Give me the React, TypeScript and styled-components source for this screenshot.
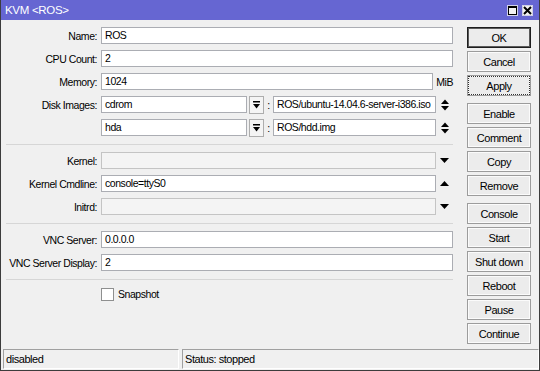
import React from "react";
import styled, { createGlobalStyle, css } from "styled-components";

const GlobalStyle = createGlobalStyle`
  html, body {
    margin: 0;
    padding: 0;
    background: #f0f0f0;
  }
  body {
    font-family: "Liberation Sans", Arial, sans-serif;
    font-size: 10.5px;
    letter-spacing: -0.45px;
    color: #000;
  }
`;

const Window = styled.div`
  width: 540px;
  height: 371px;
  box-sizing: border-box;
  border: 1px solid #3c3c3c;
  border-top: none;
  background: #f0f0f0;
  display: flex;
  flex-direction: column;
`;

const TitleBar = styled.div`
  height: 20px;
  flex: none;
  background: #6666d2;
  color: #fff;
  display: flex;
  align-items: center;
  justify-content: space-between;
  padding: 0 6px 0 4px;
  font-size: 11.5px;
  letter-spacing: -0.3px;
`;

const TitleButtons = styled.div`
  display: flex;
  gap: 4px;
  margin-top: 1px;
`;

const TitleButton = styled.div`
  width: 11px;
  height: 11px;
  box-sizing: border-box;
  background: #f2f2f2;
  border: 1px solid #d0d0e8;
  display: flex;
  align-items: center;
  justify-content: center;
`;

const Body = styled.div`
  flex: 1;
  display: flex;
  padding-top: 7px;
`;

const Form = styled.div`
  width: 452px;
  display: flex;
  flex-direction: column;
  gap: 6px;
`;

const Row = styled.div`
  display: grid;
  grid-template-columns: 96px 352px;
  column-gap: 4px;
  align-items: center;
  height: 17px;
`;

const Label = styled.div`
  text-align: right;
  white-space: nowrap;
`;

const FieldLine = styled.div`
  display: flex;
  align-items: center;
  height: 17px;
`;

const Input = styled.div<{ $disabled?: boolean; $width?: number }>`
  box-sizing: border-box;
  height: 17px;
  line-height: 15px;
  padding: 0 3px;
  border: 1px solid #abadb3;
  background: #fff;
  white-space: nowrap;
  overflow: hidden;
  ${(p) => (p.$width ? css`width: ${p.$width}px; flex: none;` : css`flex: 1;`)}
  ${(p) =>
    p.$disabled &&
    css`
      background: #f4f4f4;
      border-color: #c4c4c4;
    `}
`;

const Unit = styled.div`
  width: 20px;
  text-align: right;
`;

const DropBox = styled.div`
  width: 15px;
  height: 18px;
  box-sizing: border-box;
  margin-left: 2px;
  border: 1px solid #adadad;
  background: #f4f4f4;
  display: flex;
  align-items: center;
  justify-content: center;
`;

const Colon = styled.div`
  width: 9px;
  text-align: center;
`;

const IconCell = styled.div`
  width: 17px;
  display: flex;
  justify-content: center;
  align-items: center;
`;

const Divider = styled.div`
  height: 1px;
  background: #d6d6d6;
  margin: 2px 0 1px 5px;
  width: 447px;
`;

const CheckRow = styled.div`
  display: flex;
  align-items: center;
  gap: 4px;
  padding-left: 100px;
  height: 14px;
`;

const CheckBox = styled.div`
  width: 13px;
  height: 13px;
  box-sizing: border-box;
  border: 1px solid #8e8f8f;
  background: #fff;
`;

const ButtonColumn = styled.div`
  margin-left: 14px;
  width: 64px;
  display: flex;
  flex-direction: column;
  gap: 7px;
`;

const ButtonGroup = styled.div`
  display: flex;
  flex-direction: column;
  gap: 3px;
`;

const Button = styled.div<{ $default?: boolean; $focused?: boolean }>`
  height: 21px;
  box-sizing: border-box;
  border: 1px solid #9c9c9c;
  background: #ececec;
  box-shadow: inset 0 0 0 1px #fbfbfb;
  display: flex;
  align-items: center;
  justify-content: center;
  white-space: nowrap;
  font-size: 11px;
  ${(p) =>
    p.$default &&
    css`
      border: 1px solid #1e1e1e;
      box-shadow: inset 0 0 0 1px #5a5a5a;
    `}
  ${(p) =>
    p.$focused &&
    css`
      outline: 1px dotted #303030;
      outline-offset: -2px;
    `}
`;

const StatusBar = styled.div`
  height: 20px;
  flex: none;
  display: flex;
  gap: 3px;
  padding: 0 0 0 2px;
  margin-bottom: 1px;
`;

const StatusCell = styled.div<{ $width?: number }>`
  box-sizing: border-box;
  border: 1px solid;
  border-color: #a0a0a0 #ffffff #ffffff #a0a0a0;
  padding: 0 2px;
  line-height: 18px;
  font-size: 11px;
  ${(p) => (p.$width ? css`width: ${p.$width}px;` : css`flex: 1;`)}
`;

const DropIcon = () => (
  <svg width="7" height="8" viewBox="0 0 7 8">
    <rect x="0" y="0" width="7" height="1.5" fill="#000" />
    <polygon points="0,3 7,3 3.5,7.5" fill="#000" />
  </svg>
);

const SpinIcon = () => (
  <svg width="8" height="12" viewBox="0 0 8 12">
    <polygon points="0,5 4,0.5 8,5" fill="#000" />
    <polygon points="0,7 8,7 4,11.5" fill="#000" />
  </svg>
);

const Arrow = ({ up }: { up?: boolean }) => (
  <svg width="9" height="5" viewBox="0 0 9 5">
    <polygon points={up ? "0,5 9,5 4.5,0" : "0,0 9,0 4.5,5"} fill="#000" />
  </svg>
);

const Field = ({ label, children }: { label: string; children: React.ReactNode }) => (
  <Row>
    <Label>{label}</Label>
    <FieldLine>{children}</FieldLine>
  </Row>
);

const DiskLine = ({ type, file }: { type: string; file: string }) => (
  <>
    <Input $width={146}>{type}</Input>
    <DropBox>
      <DropIcon />
    </DropBox>
    <Colon>:</Colon>
    <Input>{file}</Input>
    <IconCell>
      <SpinIcon />
    </IconCell>
  </>
);

export default function App() {
  return (
    <>
      <GlobalStyle />
      <Window>
        <TitleBar>
          <span>KVM &lt;ROS&gt;</span>
          <TitleButtons>
            <TitleButton>
              <svg width="9" height="9" viewBox="0 0 9 9">
                <rect x="0.5" y="0.5" width="8" height="8" fill="none" stroke="#000" />
                <rect x="0.5" y="0.5" width="8" height="1.5" fill="#000" />
              </svg>
            </TitleButton>
            <TitleButton>
              <svg width="9" height="9" viewBox="0 0 9 9">
                <path d="M1 1 L8 8 M8 1 L1 8" stroke="#000" strokeWidth="2" />
              </svg>
            </TitleButton>
          </TitleButtons>
        </TitleBar>

        <Body>
          <Form>
            <Field label="Name:">
              <Input>ROS</Input>
            </Field>
            <Field label="CPU Count:">
              <Input>2</Input>
            </Field>
            <Field label="Memory:">
              <Input>1024</Input>
              <Unit>MiB</Unit>
            </Field>
            <Field label="Disk Images:">
              <DiskLine type="cdrom" file="ROS/ubuntu-14.04.6-server-i386.iso" />
            </Field>
            <Field label="">
              <DiskLine type="hda" file="ROS/hdd.img" />
            </Field>

            <Divider />

            <Field label="Kernel:">
              <Input $disabled />
              <IconCell>
                <Arrow />
              </IconCell>
            </Field>
            <Field label="Kernel Cmdline:">
              <Input>console=ttyS0</Input>
              <IconCell>
                <Arrow up />
              </IconCell>
            </Field>
            <Field label="Initrd:">
              <Input $disabled />
              <IconCell>
                <Arrow />
              </IconCell>
            </Field>

            <Divider />

            <Field label="VNC Server:">
              <Input>0.0.0.0</Input>
            </Field>
            <Field label="VNC Server Display:">
              <Input>2</Input>
            </Field>

            <Divider />

            <CheckRow>
              <CheckBox />
              <span>Snapshot</span>
            </CheckRow>
          </Form>

          <ButtonColumn>
            <ButtonGroup>
              <Button $default>OK</Button>
              <Button>Cancel</Button>
              <Button $focused>Apply</Button>
            </ButtonGroup>
            <ButtonGroup>
              <Button>Enable</Button>
              <Button>Comment</Button>
              <Button>Copy</Button>
              <Button>Remove</Button>
            </ButtonGroup>
            <ButtonGroup>
              <Button>Console</Button>
              <Button>Start</Button>
              <Button>Shut down</Button>
              <Button>Reboot</Button>
              <Button>Pause</Button>
              <Button>Continue</Button>
            </ButtonGroup>
          </ButtonColumn>
        </Body>

        <StatusBar>
          <StatusCell $width={176}>disabled</StatusCell>
          <StatusCell>Status: stopped</StatusCell>
        </StatusBar>
      </Window>
    </>
  );
}
